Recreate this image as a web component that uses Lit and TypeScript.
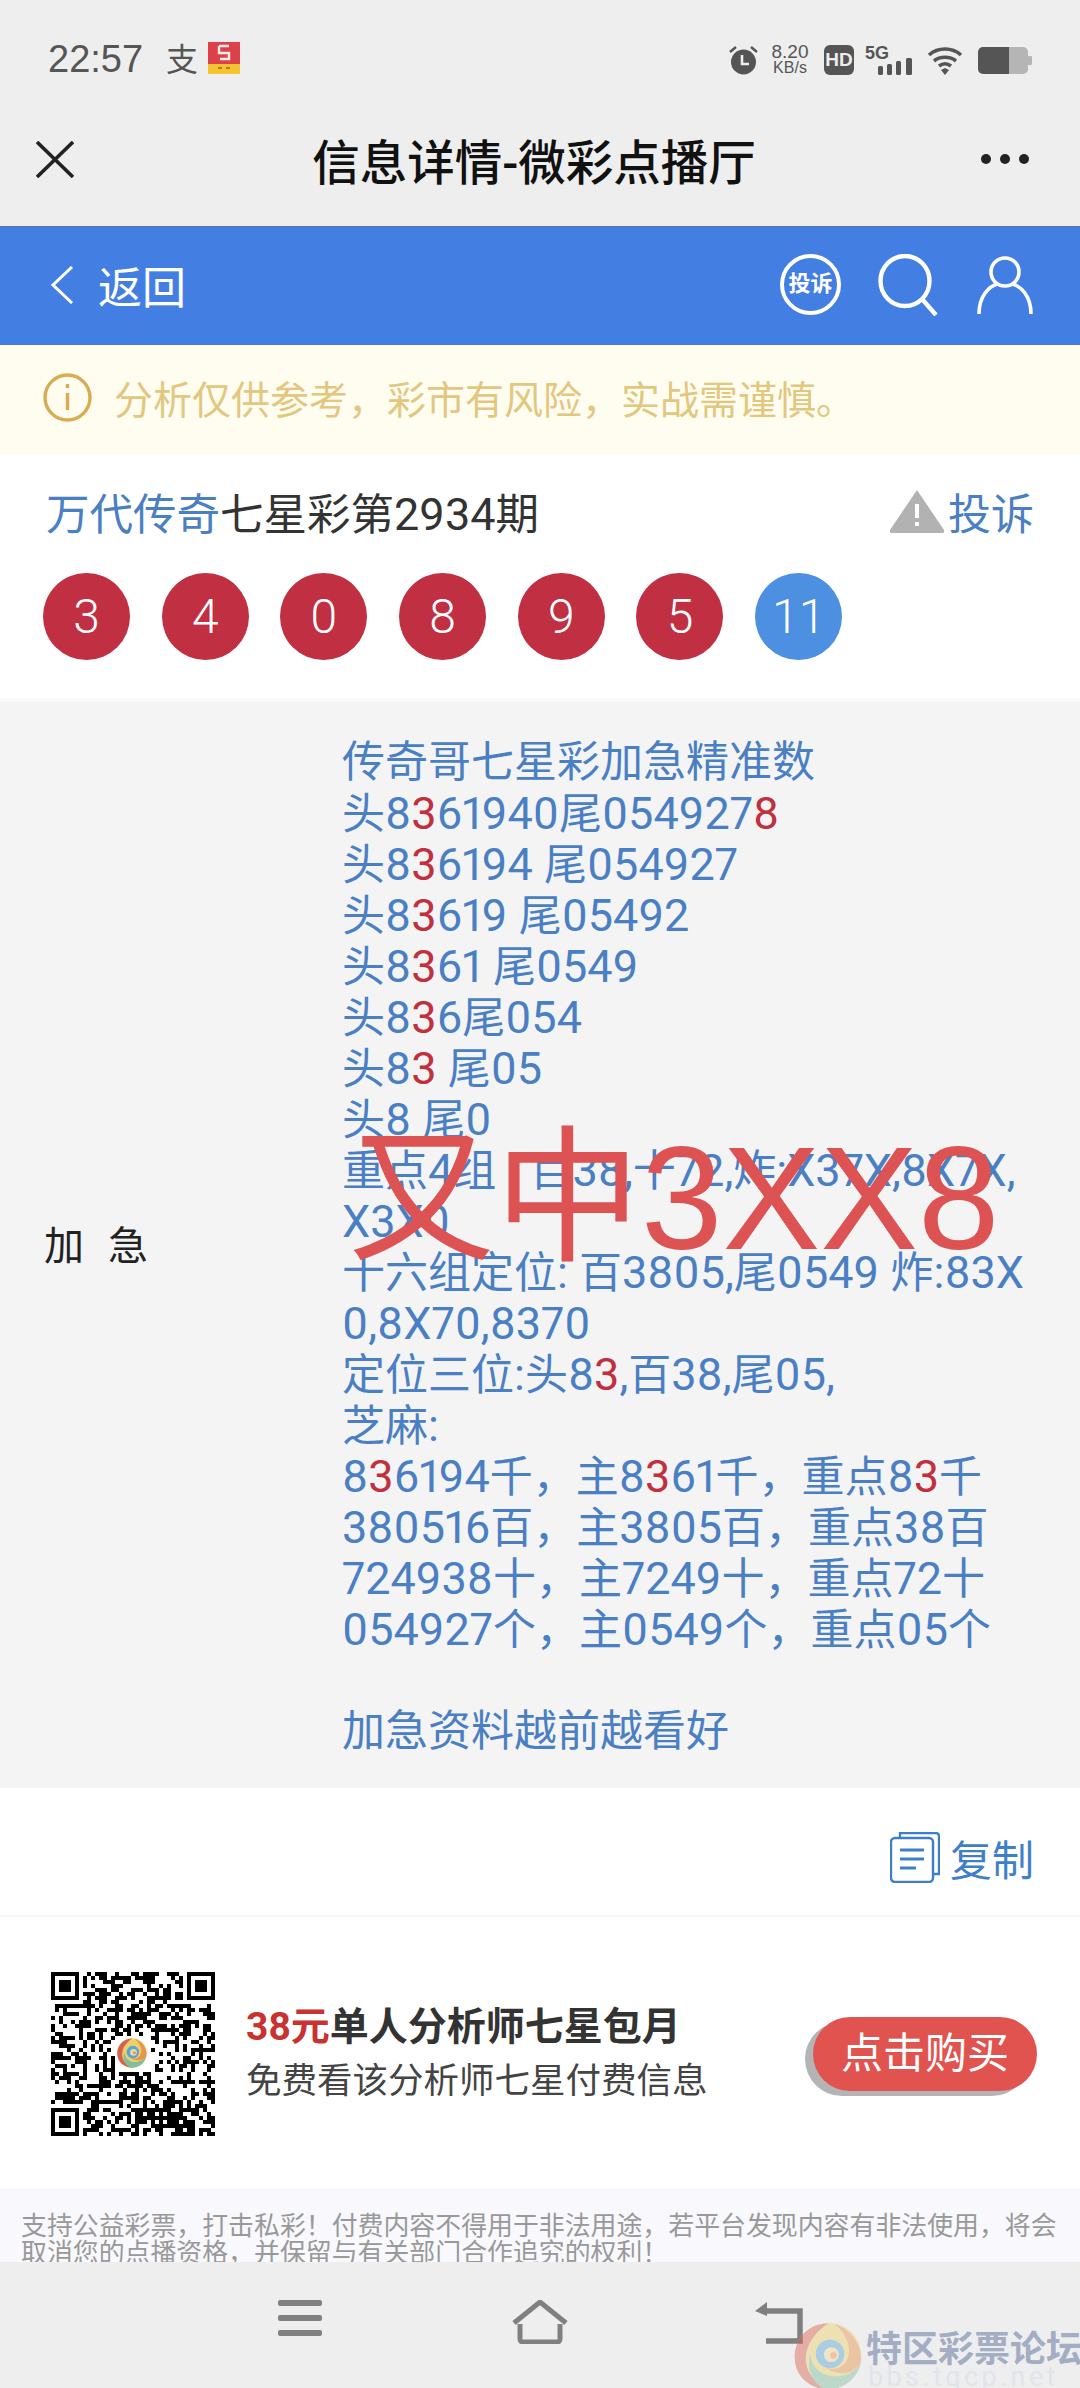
import { LitElement, css, html, svg } from 'lit'
import { customElement } from 'lit/decorators.js'

// [3] marks the digits shown in red
const LINES = [
  '传奇哥七星彩加急精准数',
  '头8[3]61940尾054927[8]',
  '头8[3]6194 尾054927',
  '头8[3]619 尾05492',
  '头8[3]61 尾0549',
  '头8[3]6尾054',
  '头8[3] 尾05',
  '头8 尾0',
  '重点4组 : 百38,十72,炸:X37X,8X7X,',
  'X3X0',
  '十六组定位: 百3805,尾0549 炸:83X',
  '0,8X70,8370',
  '定位三位:头8[3],百38,尾05,',
  '芝麻:',
  '8[3]6194千，主8[3]61千，重点8[3]千',
  '380516百，主3805百，重点38百',
  '724938十，主7249十，重点72十',
  '054927个，主0549个，重点05个',
  '',
  '加急资料越前越看好',
]

const BALLS = ['3', '4', '0', '8', '9', '5']

function qrPath() {
  const n = 41
  let seed = 20934
  const next = () => {
    seed = (seed * 1103515245 + 12345) & 0x7fffffff
    return (seed >> 16) & 1
  }
  const inFinder = (x: number, y: number, ox: number, oy: number) =>
    x >= ox && x < ox + 8 && y >= oy && y < oy + 8
  let d = ''
  for (let y = 0; y < n; y++) {
    for (let x = 0; x < n; x++) {
      const bit = next()
      if (inFinder(x, y, 0, 0) || inFinder(x, y, 33, 0) || inFinder(x, y, 0, 33)) continue
      if (x >= 16 && x <= 24 && y >= 16 && y <= 24) continue
      if (bit) d += `M${x} ${y}h1v1h-1z`
    }
  }
  for (const [ox, oy] of [[0, 0], [34, 0], [0, 34]]) {
    d += `M${ox} ${oy}h7v7h-7zM${ox + 1} ${oy + 1}v5h5v-5zM${ox + 2} ${oy + 2}h3v3h-3z`
  }
  return d
}

const swirl = svg`
  <ellipse cx="50" cy="50" rx="49" ry="49" fill="#ecd06a"/>
  <path d="M50 2C15 4 1 30 1 52c0 26 19 44 45 47C24 84 14 66 18 46 22 26 36 12 50 2z" fill="#d8604f"/>
  <path d="M46 99c24 2 48-15 52-39-8 16-32 24-50 18C34 74 24 60 24 46c-6 24 2 44 22 53z" fill="#7fbf9f"/>
  <path d="M98 60C102 36 84 10 60 3c18 15 26 37 18 53-8 14-22 16-32 10 16 14 42 12 52-6z" fill="#e9944a"/>
  <circle cx="53" cy="47" r="21" fill="#58a6d6"/>
  <circle cx="55" cy="48" r="11" fill="#f0d9a0"/>
  <circle cx="58" cy="49" r="5" fill="#e9944a"/>
`

@customElement('app-root')
export class AppRoot extends LitElement {
  static styles = css`
    :host {
      display: block;
      width: 1080px;
      height: 2388px;
      overflow: hidden;
      position: relative;
      background: #fff;
      font-family: Roboto, "Noto Sans CJK SC", sans-serif;
      color: #333;
    }
    svg { display: block; flex: none; }

    .status {
      height: 116px;
      box-sizing: border-box;
      padding: 42px 48px 0 48px;
      background: #eeeeee;
      display: flex;
      align-items: flex-start;
      color: #555;
    }
    .time {
      font-family: "Liberation Sans", sans-serif;
      font-size: 38px;
      line-height: 34px;
      width: 118px;
    }
    .alipay { font-size: 32px; line-height: 36px; width: 42px; color: #555; }
    .status-right { margin-left: auto; display: flex; align-items: center; height: 36px; }
    .speed {
      width: 40px;
      margin: 0 14px 0 12px;
      font-family: "Liberation Sans", sans-serif;
      font-size: 19px;
      line-height: 16px;
      text-align: center;
      color: #555;
    }
    .speed small { font-size: 16px; display: block; }
    .hd {
      width: 30px;
      height: 30px;
      margin-right: 11px;
      border-radius: 6px;
      background: #555;
      color: #eee;
      font: 700 19px/30px "Liberation Sans", sans-serif;
      text-align: center;
    }
    .net { position: relative; width: 48px; height: 30px; margin-right: 14px; }
    .net span {
      position: absolute;
      left: 0;
      top: -1px;
      font: 700 18px/18px "Liberation Sans", sans-serif;
    }
    .battery { margin-left: 15px; }

    .nav {
      height: 110px;
      box-sizing: border-box;
      padding: 0 50px 24px 36px;
      background: #eeeeee;
      display: flex;
      align-items: center;
      justify-content: space-between;
    }
    .nav-title { font-size: 47.5px; font-weight: 500; color: #111; margin-left: 14px; }

    .head {
      height: 119px;
      box-sizing: border-box;
      padding: 0 47px 4px 50px;
      background: #437ee2;
      border-top: 2px solid #4a78cc;
      color: #fff;
      display: flex;
      align-items: center;
    }
    .back { font-size: 44px; margin-left: 24px; margin-right: auto; }
    .report {
      width: 61px;
      height: 61px;
      box-sizing: border-box;
      border: 4px solid #fff;
      border-radius: 50%;
      font-size: 22px;
      font-weight: 700;
      line-height: 52px;
      text-align: center;
      margin-right: 37px;
    }
    .search { margin-right: 39px; }

    .notice {
      height: 110px;
      box-sizing: border-box;
      padding: 0 40px 6px 43px;
      background: #fffdf0;
      color: #e2c77f;
      font-size: 39px;
      display: flex;
      align-items: center;
      gap: 22px;
    }

    .issue {
      height: 247px;
      box-sizing: border-box;
      padding: 26px 46px 0 43px;
      border-bottom: 4px solid #f9f9f9;
    }
    .issue-top {
      display: flex;
      align-items: center;
      justify-content: space-between;
      height: 60px;
      padding-left: 3px;
    }
    .issue-title { font-size: 43.5px; color: #333; }
    .link { color: #4a7fc4; }
    .complain { display: flex; align-items: center; gap: 4px; font-size: 43px; color: #4a7fc4; }
    .balls { display: flex; gap: 31.7px; margin-top: 32px; }
    .ball {
      width: 87px;
      height: 87px;
      border-radius: 50%;
      background: #c02f42;
      color: #fff;
      font-size: 48px;
      font-weight: 300;
      line-height: 87px;
      text-align: center;
    }
    .ball.blue { background: #4d8fe0; }

    .detail {
      position: relative;
      height: 1086px;
      background: #f4f4f4;
      display: grid;
      grid-template-columns: 342px 1fr;
      align-items: center;
    }
    .label { padding: 0 0 4px 44px; font-size: 40px; color: #222; word-spacing: 14px; }
    .text {
      align-self: start;
      padding-top: 35px;
      font-size: 43px;
      line-height: 51px;
      color: #4a7fc4;
      white-space: pre;
    }
    .text div { height: 51px; }
    .num { font-size: 45px; font-variant-numeric: proportional-nums; }
    .text b { font-weight: 400; color: #c0303f; }
    .stamp {
      position: absolute;
      left: 348px;
      top: 406px;
      font-family: "Liberation Sans", "Noto Sans CJK SC", sans-serif;
      font-size: 146.5px;
      line-height: 180px;
      color: #dd5252;
      white-space: pre;
    }

    .copy {
      height: 129px;
      box-sizing: border-box;
      padding: 12px 46px 0 0;
      border-bottom: 2px solid #f8f8f8;
      display: flex;
      align-items: center;
      justify-content: flex-end;
      gap: 10px;
      font-size: 42px;
      color: #3f7fc8;
    }

    .promo {
      height: 271px;
      box-sizing: border-box;
      padding: 3px 43px 0 50px;
      display: flex;
      align-items: center;
    }
    .qr { position: relative; width: 165px; height: 164px; flex: none; }
    .qr-logo { position: absolute; left: 67px; top: 65px; }
    .promo-text { margin-left: 31px; flex: 1; }
    .promo-title { font-size: 39px; font-weight: 700; color: #333; line-height: 54px; }
    .promo-title em { font-style: normal; color: #c8322f; }
    .promo-sub { font-size: 35.5px; color: #444; line-height: 54px; }
    .buy {
      width: 224px;
      height: 74px;
      border-radius: 37px;
      background: #e0534f;
      box-shadow: -8px 5px 0 #b4b4b4;
      color: #fff;
      font-size: 42px;
      line-height: 74px;
      text-align: center;
    }

    .legal {
      height: 74px;
      overflow: hidden;
      box-sizing: border-box;
      padding: 25px 20px 0 21px;
      background: #f8f8fd;
      color: #999;
      font-size: 25.9px;
      line-height: 27px;
      white-space: pre;
    }

    .bottom {
      height: 126px;
      box-sizing: border-box;
      padding: 38px 0 0 278px;
      background: #eeeeee;
      display: flex;
      align-items: flex-start;
    }
    .home { margin-left: 190px; }
    .return { margin-left: 186px; margin-top: 2px; }
    .mark {
      position: absolute;
      left: 794px;
      top: 2322px;
      width: 286px;
      height: 66px;
      overflow: hidden;
    }
    .mark-logo { opacity: 0.45; }
    .mark-name {
      position: absolute;
      left: 72px;
      top: 5px;
      font-size: 36px;
      line-height: 46px;
      font-weight: 700;
      color: #a3adc4;
      white-space: pre;
    }
    .mark-url {
      position: absolute;
      left: 74px;
      top: 40px;
      font-size: 27px;
      line-height: 30px;
      letter-spacing: 3.4px;
      color: #e0e4ec;
      white-space: pre;
    }
  `

  // latin runs are a touch larger than the CJK around them, as in the reference
  private renderRuns(text: string) {
    return text
      .split(/([\x20-\x7e]+)/)
      .map((run, i) => (i % 2 ? html`<span class="num">${run}</span>` : run))
  }

  private renderLine(line: string) {
    const parts = line.split(/\[(\d)\]/)
    return html`<div>${parts.map((p, i) =>
      i % 2 ? html`<b class="num">${p}</b>` : this.renderRuns(p))}</div>`
  }

  private renderStatus() {
    return html`
      <div class="status">
        <span class="time">22:57</span>
        <span class="alipay">支</span>
        <svg width="32" height="32" viewBox="0 0 32 32">
          <rect width="32" height="22" fill="#dc4048"/>
          <rect y="22" width="32" height="10" fill="#f3c42f"/>
          <path d="M11 4h10M11 4v7h10v6h-9" fill="none" stroke="#fbeaea" stroke-width="2.4"/>
          <path d="M10 26h4M18 26h4" stroke="#b5762a" stroke-width="2"/>
        </svg>
        <div class="status-right">
          <svg width="29" height="30" viewBox="0 0 29 30">
            <circle cx="14.5" cy="17" r="12.5" fill="#555"/>
            <path d="M13 10v9h7" fill="none" stroke="#eee" stroke-width="2.6"/>
            <path d="M1 7l6-5M28 7l-6-5" stroke="#555" stroke-width="2.4"/>
          </svg>
          <div class="speed">8.20<small>KB/s</small></div>
          <div class="hd">HD</div>
          <div class="net">
            <span>5G</span>
            <svg width="48" height="30" viewBox="0 0 48 30" fill="#555">
              <rect x="13" y="21" width="5" height="9" rx="1.5"/>
              <rect x="22" y="19" width="5" height="11" rx="1.5"/>
              <rect x="31" y="16" width="5" height="14" rx="1.5"/>
              <rect x="41" y="13" width="6" height="17" rx="1.5"/>
            </svg>
          </div>
          <svg width="36" height="29" viewBox="0 0 36 29" fill="none" stroke="#555" stroke-width="3.6">
            <path d="M2 9c9-8 23-8 32 0M7 15c6-5 16-5 22 0M12 20c4-3 8-3 12 0"/>
            <path d="M14 24l4-2 4 2-4 5z" fill="#555" stroke="none"/>
          </svg>
          <svg class="battery" width="54" height="27" viewBox="0 0 54 27">
            <path d="M31 0H5a5 5 0 0 0-5 5v17a5 5 0 0 0 5 5h26z" fill="#555"/>
            <path d="M31 0h14a5 5 0 0 1 5 5v17a5 5 0 0 1-5 5H31z" fill="#b5b5b5"/>
            <rect x="50" y="9" width="4" height="9" rx="1" fill="#b5b5b5"/>
          </svg>
        </div>
      </div>`
  }

  private renderNav() {
    return html`
      <div class="nav">
        <svg width="38" height="37" viewBox="0 0 38 37" fill="none" stroke="#222" stroke-width="3.6">
          <path d="M1 1l36 35M37 1L1 36"/>
        </svg>
        <span class="nav-title">信息详情-微彩点播厅</span>
        <svg width="50" height="12" viewBox="0 0 50 12" fill="#222">
          <circle cx="6" cy="6" r="5"/><circle cx="25" cy="6" r="5"/><circle cx="44" cy="6" r="5"/>
        </svg>
      </div>`
  }

  private renderHead() {
    return html`
      <div class="head">
        <svg width="24" height="38" viewBox="0 0 24 38" fill="none" stroke="#fff" stroke-width="3">
          <path d="M22 1L3 19l19 18"/>
        </svg>
        <span class="back">返回</span>
        <div class="report">投诉</div>
        <svg class="search" width="60" height="62" viewBox="0 0 60 62" fill="none" stroke="#fff" stroke-width="4.4">
          <ellipse cx="27" cy="27" rx="24.5" ry="25"/>
          <path d="M44 45l14 16"/>
        </svg>
        <svg width="56" height="58" viewBox="0 0 56 58" fill="none" stroke="#fff" stroke-width="3.6">
          <circle cx="28" cy="16" r="14"/>
          <path d="M2 58c0-18 10-28 19-30M54 58c0-18-10-28-19-30"/>
        </svg>
      </div>`
  }

  render() {
    return html`
      ${this.renderStatus()}
      ${this.renderNav()}
      ${this.renderHead()}
      <div class="notice">
        <svg width="49" height="49" viewBox="0 0 49 49" fill="none" stroke="#d9ac52" stroke-width="3.4">
          <circle cx="24.5" cy="24.5" r="22.5"/>
          <path d="M24.5 20v17M24.5 11v4"/>
        </svg>
        <span>分析仅供参考，彩市有风险，实战需谨慎。</span>
      </div>
      <div class="issue">
        <div class="issue-top">
          <span class="issue-title"><span class="link">万代传奇</span>七星彩第${this.renderRuns('2934')}期</span>
          <span class="complain">
            <svg width="54" height="44" viewBox="0 0 54 44">
              <path d="M27 1L54 41a2 2 0 0 1-2 3H2a2 2 0 0 1-2-3z" fill="#b2b2b2"/>
              <rect x="25" y="15" width="4" height="14" fill="#fff"/>
              <rect x="25" y="33" width="4" height="4" fill="#fff"/>
            </svg>
            投诉
          </span>
        </div>
        <div class="balls">
          ${BALLS.map((b) => html`<div class="ball">${b}</div>`)}
          <div class="ball blue">11</div>
        </div>
      </div>
      <div class="detail">
        <div class="label">加 急</div>
        <div class="text">${LINES.map((l) => this.renderLine(l))}</div>
        <div class="stamp">又中3XX8</div>
      </div>
      <div class="copy">
        <svg width="50" height="51" viewBox="0 0 50 51" fill="none" stroke="#3f7fc8" stroke-width="2.4">
          <path d="M10 5V1h36a3 3 0 0 1 3 3v38h-6"/>
          <rect x="1" y="6" width="42" height="44" rx="4"/>
          <path d="M10 18h24M10 27h24M10 36h16" stroke-width="3"/>
        </svg>
        复制
      </div>
      <div class="promo">
        <div class="qr">
          <svg width="165" height="164" viewBox="0 0 41 41" shape-rendering="crispEdges">
            <path fill-rule="evenodd" d=${qrPath()} fill="#000"/>
          </svg>
          <svg class="qr-logo" width="30" height="32" viewBox="0 0 100 100">${swirl}</svg>
        </div>
        <div class="promo-text">
          <div class="promo-title"><em>38元</em>单人分析师七星包月</div>
          <div class="promo-sub">免费看该分析师七星付费信息</div>
        </div>
        <div class="buy">点击购买</div>
      </div>
      <div class="legal">支持公益彩票，打击私彩！付费内容不得用于非法用途，若平台发现内容有非法使用，将会
取消您的点播资格，并保留与有关部门合作追究的权利！</div>
      <div class="bottom">
        <svg width="44" height="36" viewBox="0 0 44 36" fill="#808080">
          <rect width="44" height="6" rx="2"/><rect y="15" width="44" height="6" rx="2"/><rect y="30" width="44" height="6" rx="2"/>
        </svg>
        <svg class="home" width="56" height="44" viewBox="0 0 56 44" fill="none" stroke="#808080" stroke-width="5">
          <path d="M2 23L28 2l26 21M8 24v15a3 3 0 0 0 3 3h34a3 3 0 0 0 3-3V24"/>
        </svg>
        <svg class="return" width="50" height="42" viewBox="0 0 50 42" fill="none" stroke="#808080" stroke-width="5.5">
          <path d="M8 9h38v30H12"/>
          <path d="M13 0L1 9l12 5z" fill="#808080" stroke="none"/>
        </svg>
      </div>
      <div class="mark">
        <svg class="mark-logo" width="68" height="68" viewBox="0 0 100 100">${swirl}</svg>
        <span class="mark-name">特区彩票论坛</span>
        <span class="mark-url">bbs.tqcp.net</span>
      </div>
    `
  }
}

declare global {
  interface HTMLElementTagNameMap {
    'app-root': AppRoot
  }
}
